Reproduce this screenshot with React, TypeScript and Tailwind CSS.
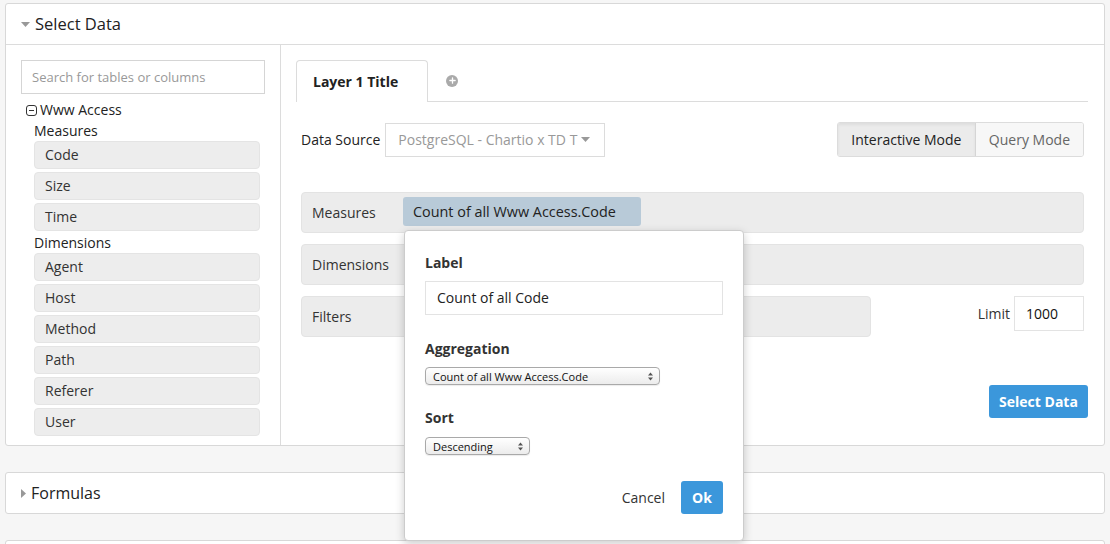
import { Plus } from 'lucide-react';

const measures = ['Code', 'Size', 'Time'];
const dimensions = ['Agent', 'Host', 'Method', 'Path', 'Referer', 'User'];

function TreeItem({ label }: { label: string }) {
  return (
    <div className="h-[28px] rounded-[4px] border border-[#e4e4e4] bg-[#ededed] pl-[10px] text-[14px] leading-[26px] text-[#333]">
      {label}
    </div>
  );
}

function MacSelect({ value, width }: { value: string; width: string }) {
  return (
    <div
      className={`${width} flex h-[18px] items-center justify-between rounded-[4px] border border-[#a9a9a9] bg-gradient-to-b from-white to-[#ececec] pl-[7px] pr-[6px] text-[11px] leading-none text-[#111] shadow-[0_1px_1px_rgba(0,0,0,0.08)]`}
    >
      <span>{value}</span>
      <svg width="5" height="9" viewBox="0 0 5 9" className="text-[#555]">
        <path d="M0 3.5 L2.5 0.5 L5 3.5 Z M0 5.5 L2.5 8.5 L5 5.5 Z" fill="currentColor" />
      </svg>
    </div>
  );
}

function MeasurePopover() {
  return (
    <div className="absolute left-[1px] top-[calc(100%+4px)] z-20 w-[340px] rounded-[4px] border border-[#ccc] bg-white px-[20px] pb-[26px] pt-[22px] shadow-[0_3px_10px_rgba(0,0,0,0.2)]">
      <div className="text-[14px] font-bold leading-[20px] text-[#333]">Label</div>
      <div className="mt-[8px] h-[34px] border border-[#e3e3e3] pl-[11px] text-[14px] leading-[32px] text-[#222]">
        Count of all Code
      </div>
      <div className="mt-[24px] text-[14px] font-bold leading-[20px] text-[#333]">Aggregation</div>
      <div className="mt-[8px]">
        <MacSelect value="Count of all Www Access.Code" width="w-[235px]" />
      </div>
      <div className="mt-[23px] text-[14px] font-bold leading-[20px] text-[#333]">Sort</div>
      <div className="mt-[9px]">
        <MacSelect value="Descending" width="w-[105px]" />
      </div>
      <div className="mt-[26px] flex items-center justify-end gap-[16px]">
        <span className="text-[14px] text-[#333]">Cancel</span>
        <button className="h-[33px] w-[42px] rounded-[3px] bg-[#3b97db] text-[14px] font-bold text-white">Ok</button>
      </div>
    </div>
  );
}

function Caret({ down }: { down?: boolean }) {
  return down ? (
    <svg width="9" height="5" viewBox="0 0 9 5">
      <path d="M0 0 H9 L4.5 5 Z" fill="#999" />
    </svg>
  ) : (
    <svg width="5" height="9" viewBox="0 0 5 9">
      <path d="M0 0 V9 L5 4.5 Z" fill="#999" />
    </svg>
  );
}

export default function App() {
  return (
    <div
      className="h-[544px] overflow-hidden bg-[#f6f6f6] px-[5px] pt-[3px] text-[#333]"
      style={{ fontFamily: '"Open Sans", "Noto Sans", sans-serif' }}
    >
      <div className="rounded-[3px] border border-[#d8d8d8] bg-white">
        <div className="flex h-[41px] items-center gap-[5px] border-b border-[#dcdcdc] pl-[15px]">
          <Caret down />
          <span className="text-[16.5px] text-[#222]">Select Data</span>
        </div>
        <div className="flex">
          <div className="w-[275px] shrink-0 border-r border-[#dcdcdc] pb-[9px] pl-[15px] pr-[15px] pt-[15px]">
            <div className="h-[34px] border border-[#d5d5d5] pl-[10px] text-[13px] leading-[32px] text-[#999]">
              Search for tables or columns
            </div>
            <div className="mt-[6px] flex items-center gap-[3px] pl-[5px] text-[14px] leading-[20px] text-[#222]">
              <svg width="11" height="11" viewBox="0 0 11 11">
                <rect x="0.5" y="0.5" width="10" height="10" rx="2.5" fill="none" stroke="#333" />
                <path d="M3 5.5 H8" stroke="#333" />
              </svg>
              <span>Www Access</span>
            </div>
            <div className="pl-[13px] pr-[5px]">
              <div className="mt-[1px] text-[14px] leading-[20px] text-[#222]">Measures</div>
              <div className="flex flex-col gap-[3px]">
                {measures.map((m) => (
                  <TreeItem key={m} label={m} />
                ))}
              </div>
              <div className="mt-[2px] text-[14px] leading-[20px] text-[#222]">Dimensions</div>
              <div className="flex flex-col gap-[3px]">
                {dimensions.map((d) => (
                  <TreeItem key={d} label={d} />
                ))}
              </div>
            </div>
          </div>

          <div className="flex-1 pl-[15px] pr-[16px] pt-[15px]">
            <div className="flex items-end border-b border-[#dcdcdc]">
              <div className="-mb-px h-[42px] w-[132px] rounded-t-[4px] border border-b-0 border-[#dcdcdc] bg-white pl-[16px] text-[14px] font-bold leading-[41px] text-[#222]">
                Layer 1 Title
              </div>
              <div className="flex h-[41px] items-center pl-[18px]">
                <span className="flex h-[12px] w-[12px] items-center justify-center rounded-full bg-[#aaa]">
                  <Plus size={9} strokeWidth={3.5} color="#fff" />
                </span>
              </div>
            </div>

            <div className="pl-[5px] pr-[4px]">
              <div className="mt-[20px] flex items-center">
                <span className="mr-[5px] text-[14px] text-[#222]">Data Source</span>
                <div className="flex h-[34px] w-[220px] items-center border border-[#dcdcdc] pl-[12px] pr-[14px] text-[14px] text-[#999]">
                  <span className="flex-1 truncate">PostgreSQL - Chartio x TD T</span>
                  <Caret down />
                </div>
                <div className="ml-auto flex h-[35px] overflow-hidden rounded-[3px] border border-[#dcdcdc] text-[14px]">
                  <div className="flex items-center border-r border-[#d5d5d5] bg-[#ebebeb] px-[13.5px] text-[#222] shadow-[inset_0_2px_3px_rgba(0,0,0,0.06)]">
                    Interactive Mode
                  </div>
                  <div className="flex items-center bg-[#f7f7f7] px-[13px] text-[#666]">Query Mode</div>
                </div>
              </div>

              <div className="mt-[35px] flex flex-col gap-[11px]">
                <div className="relative z-10 flex h-[41px] items-start rounded-[4px] border border-[#e3e3e3] bg-[#ececec] pl-[10px]">
                  <span className="w-[91px] text-[14px] leading-[39px] text-[#333]">Measures</span>
                  <div className="relative mt-[4px]">
                    <div className="flex h-[29px] w-[238px] items-center rounded-[3px] bg-[#b8cad8] px-[10px] text-[14.4px] text-[#222]">
                      Count of all Www Access.Code
                    </div>
                    <MeasurePopover />
                  </div>
                </div>
                <div className="flex h-[41px] items-center rounded-[4px] border border-[#e3e3e3] bg-[#ececec] pl-[10px]">
                  <span className="text-[14px] text-[#333]">Dimensions</span>
                </div>
                <div className="flex items-start">
                  <div className="flex h-[41px] w-[570px] items-center rounded-[4px] border border-[#e3e3e3] bg-[#ececec] pl-[10px]">
                    <span className="text-[14px] text-[#333]">Filters</span>
                  </div>
                  <div className="ml-auto flex items-center gap-[4px]">
                    <span className="text-[14px] text-[#333]">Limit</span>
                    <div className="h-[35px] w-[70px] border border-[#e3e3e3] pl-[11px] text-[14px] leading-[33px] text-[#111]">
                      1000
                    </div>
                  </div>
                </div>
              </div>
            </div>

            <div className="mt-[48px] flex justify-end">
              <button className="h-[33px] w-[99px] rounded-[3px] bg-[#3b97db] text-[14px] font-bold text-white">
                Select Data
              </button>
            </div>
          </div>
        </div>
      </div>

      <div className="mt-[26px] flex h-[42px] items-center gap-[5px] rounded-[3px] border border-[#d8d8d8] bg-white pl-[15px]">
        <Caret />
        <span className="text-[16px] text-[#222]">Formulas</span>
      </div>

      <div className="mt-[26px] h-[40px] rounded-[3px] border border-[#d8d8d8] bg-white" />
    </div>
  );
}
